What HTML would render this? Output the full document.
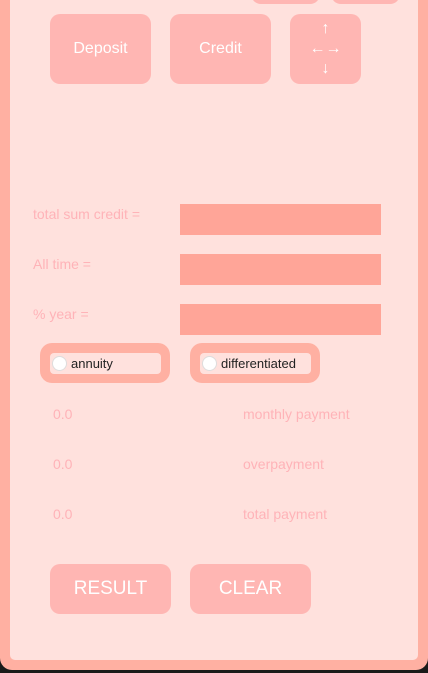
<!DOCTYPE html>
<html><head><style>
*{margin:0;padding:0;box-sizing:border-box}
body{width:428px;height:673px;background:#1a1a1a;position:relative;overflow:hidden;font-family:"Liberation Sans",sans-serif}
.outer{position:absolute;left:0;top:0;width:428px;height:670px;background:#ffb0a2;border-radius:0 0 12px 12px}
.inner{position:absolute;left:10px;top:0;width:408px;height:660px;background:#ffe1dd;border-radius:0 0 5px 5px}
.btn{position:absolute;background:#ffb6b3;border-radius:10px;color:#fff;display:flex;align-items:center;justify-content:center}
.lbl{position:absolute;color:#ffb3b8;font-size:14px}
.fld{position:absolute;left:180px;width:201px;height:31px;background:#ffa598}
.rg{position:absolute;top:343px;width:130px;height:40px;background:#ffb0a2;border-radius:12px}
.ri{position:absolute;left:10px;top:10px;width:111px;height:21px;background:#ffe1dd;border-radius:4px;font-size:13px;color:#222;line-height:21px;padding-left:21px}
.ri i{position:absolute;left:2px;top:3px;width:15px;height:15px;border-radius:50%;background:#fff;border:1px solid #ddd}
</style></head><body>
<div class="outer"></div>
<div class="inner"></div>
<div class="btn" style="left:251px;top:-20px;width:69px;height:24px"></div>
<div class="btn" style="left:331px;top:-20px;width:69px;height:24px"></div>
<div class="btn" style="left:50px;top:14px;width:101px;height:70px;font-size:16px">Deposit</div>
<div class="btn" style="left:170px;top:14px;width:101px;height:70px;font-size:16px">Credit</div>
<div class="btn" style="left:290px;top:14px;width:71px;height:70px;flex-direction:column;font-size:16px;line-height:20px"><span>↑</span><span>←→</span><span>↓</span></div>
<div class="lbl" style="left:33px;top:206px">total sum credit =</div>
<div class="lbl" style="left:33px;top:256px">All time =</div>
<div class="lbl" style="left:33px;top:306px">% year =</div>
<div class="fld" style="top:204px"></div>
<div class="fld" style="top:254px"></div>
<div class="fld" style="top:304px"></div>
<div class="rg" style="left:40px"><div class="ri"><i></i>annuity</div></div>
<div class="rg" style="left:190px"><div class="ri"><i></i>differentiated</div></div>
<div class="lbl" style="left:53px;top:406px">0.0</div>
<div class="lbl" style="left:243px;top:406px">monthly payment</div>
<div class="lbl" style="left:53px;top:456px">0.0</div>
<div class="lbl" style="left:243px;top:456px">overpayment</div>
<div class="lbl" style="left:53px;top:506px">0.0</div>
<div class="lbl" style="left:243px;top:506px">total payment</div>
<div class="btn" style="left:50px;top:564px;width:121px;height:50px;font-size:19px">RESULT</div>
<div class="btn" style="left:190px;top:564px;width:121px;height:50px;font-size:19px">CLEAR</div>
</body></html>
